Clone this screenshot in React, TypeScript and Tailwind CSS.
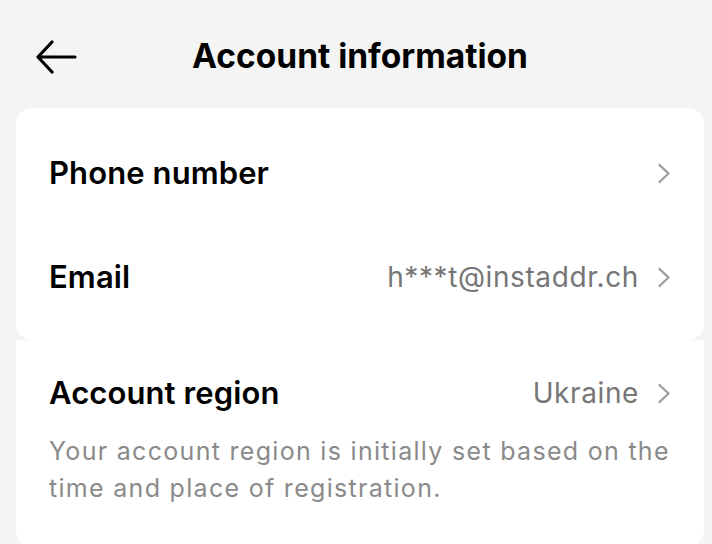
const font = { fontFamily: "Inter, 'Noto Sans', sans-serif" };

function Chevron() {
  return (
    <svg width="14" height="21" viewBox="0 0 14 21" fill="none" stroke="#9e9e9e" strokeWidth="2.4" strokeLinecap="round" strokeLinejoin="round">
      <path d="M2.5 2L11.5 10.5L2.5 19" />
    </svg>
  );
}

function Row({ label, value }: { label: string; value?: string }) {
  return (
    <div className="flex items-center justify-between h-[104px] pl-[33px] pr-[33px]">
      <span className="text-[31px] font-semibold text-black tracking-[0.1px]">{label}</span>
      <div className="flex items-center gap-[18px]">
        {value && <span className="text-[28px] tracking-[0.6px] text-[#767676]">{value}</span>}
        <Chevron />
      </div>
    </div>
  );
}

export default function App() {
  return (
    <div style={font} className="w-[712px] h-[544px] overflow-hidden bg-[#f4f4f4]">
      <header className="relative flex items-center justify-center h-[108px] pt-[5px] pl-[8px]">
        <svg
          className="absolute left-[35px] top-[40px]"
          width="42"
          height="34"
          viewBox="0 0 42 34"
          fill="none"
          stroke="black"
          strokeWidth="3.2"
          strokeLinecap="round"
          strokeLinejoin="round"
        >
          <path d="M40 17H3M17 2L3 17L17 32" />
        </svg>
        <h1 className="text-[33.5px] font-bold text-black">Account information</h1>
      </header>
      <div className="ml-[16px] mr-[8px] bg-white rounded-[16px] pt-[13px] pb-[11px] relative z-10">
        <Row label="Phone number" />
        <Row label="Email" value="h***t@instaddr.ch" />
      </div>
      <div className="ml-[16px] mr-[8px] bg-white rounded-b-[16px] pt-[1px] pb-[40px]">
        <Row label="Account region" value="Ukraine" />
        <p className="-mt-[12px] px-[33px] text-[25px] leading-[37px] tracking-[1.3px] whitespace-nowrap text-[#8a8a8a]">
          Your account region is initially set based on the
          <br />
          time and place of registration.
        </p>
      </div>
    </div>
  );
}
